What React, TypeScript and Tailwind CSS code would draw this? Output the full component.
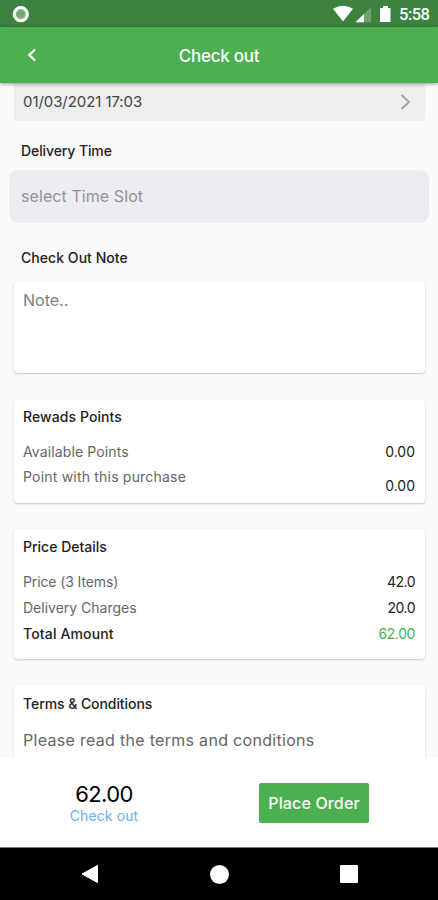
import type { ReactNode } from 'react'

interface RowProps {
  label: string
  value: string
  labelClass?: string
  valueClass?: string
}

function Card({ className, children }: { className: string; children: ReactNode }) {
  return (
    <div
      className={`ml-[14px] mr-[13px] pl-[9px] pr-[10px] shrink-0 bg-white rounded-[4px] shadow-[0_1px_2px_rgba(0,0,0,0.2)] ${className}`}
    >
      {children}
    </div>
  )
}

function Row({ label, value, labelClass = '', valueClass = '' }: RowProps) {
  return (
    <div className="flex justify-between h-[26px] leading-[26px] text-[14px]">
      <span className={labelClass}>{label}</span>
      <span className={valueClass}>{value}</span>
    </div>
  )
}

function StatusBar() {
  return (
    <div className="h-[27px] shrink-0 bg-[#3b833e] flex items-center justify-between pl-[12px] pr-[9px]">
      <svg width="18" height="18" viewBox="0 0 18 18">
        <circle cx="8.8" cy="9.2" r="6.6" fill="#8dbb8f" stroke="#fff" strokeWidth="3" />
        <circle cx="8.8" cy="9.2" r="4" fill="#78a87a" />
      </svg>
      <div className="flex items-center">
        <svg width="48" height="18" viewBox="0 0 48 18" className="mr-[4px]">
          <path d="M0 3.800 Q10 -2.300 20 3.800 L10 16.500Z" fill="#fff" />
          <path d="M38 2 V17.300 H22.500Z" fill="#719f73" />
          <path d="M31 9 V17.300 H22.500Z" fill="#fff" />
        </svg>
        <svg width="11" height="18" viewBox="0 0 11 18" className="-ml-[5px] mr-[8px]">
          <path d="M3 1 h5 v2 h2.500 v14 h-10.500 v-14 h3Z" fill="#fff" />
        </svg>
        <span className="w-[30px] font-['Roboto'] font-medium text-[16.500px] tracking-[-0.5px] leading-[27px] pt-[2px] text-white">
          5:58
        </span>
      </div>
    </div>
  )
}

function AppBar() {
  return (
    <div className="h-[56px] shrink-0 bg-[#4caf50] flex items-center relative z-10 shadow-[0_1px_4px_rgba(0,0,0,0.4)]">
      <svg width="10" height="14" viewBox="0 0 10 14" className="ml-[27px]">
        <path d="M8 1.500 L2.200 7 L8 12.500" fill="none" stroke="#fff" strokeWidth="2.300" />
      </svg>
      <h1 className="flex-1 text-center pr-[37px] pt-[3px] text-[17px] font-medium text-white tracking-[-0.25px]">
        Check out
      </h1>
    </div>
  )
}

export default function App() {
  return (
    <div className="w-[438px] h-[900px] flex flex-col overflow-hidden bg-[#fafafa] font-['Inter',sans-serif] text-[#222] whitespace-nowrap">
      <StatusBar />
      <AppBar />

      <main className="flex-1 min-h-0 overflow-hidden flex flex-col">
        {/* Delivery date */}
        <div className="ml-[14px] mr-[13px] h-[38px] shrink-0 bg-[#eeeeee] rounded-b-[3px] flex items-center justify-between pl-[9px] pr-[14px]">
          <span className="text-[15px] text-[#444] tracking-[-0.07px]">01/03/2021 17:03</span>
          <svg width="11" height="18" viewBox="0 0 11 18">
            <path d="M1.500 2 L9 9 L1.500 16" fill="none" stroke="#a3a3a3" strokeWidth="2" />
          </svg>
        </div>

        {/* Time slot */}
        <h2 className="mt-[20px] ml-[21px] h-[20px] leading-[20px] shrink-0 text-[14px] font-medium tracking-[-0.1px]">
          Delivery Time
        </h2>
        <div className="mt-[9px] mx-[9px] h-[53px] shrink-0 rounded-[9px] bg-[#ecedf1] flex items-center pl-[12px] pb-px">
          <span className="text-[16px] text-[#929399] tracking-[0.08px]">select Time Slot</span>
        </div>

        {/* Note */}
        <h2 className="mt-[25px] ml-[21px] h-[20px] leading-[20px] shrink-0 text-[14px] font-medium tracking-[0.05px]">
          Check Out Note
        </h2>
        <Card className="mt-[14px] h-[91px] pt-[6px]">
          <p className="text-[16px] leading-[24px] text-[#808080]">Note..</p>
        </Card>

        <Card className="mt-[27px] h-[103px] pt-[7px]">
          <h3 className="text-[14px] leading-[20px] font-medium tracking-[0.08px]">Rewads Points</h3>
          <div className="mt-[12px]">
            <Row label="Available Points" value="0.00" labelClass="text-[#666] tracking-[0.12px]" />
            <Row
              label="Point with this purchase"
              value="0.00"
              labelClass="text-[#666] tracking-[0.2px] -mt-px"
              valueClass="mt-[8px]"
            />
          </div>
        </Card>

        <Card className="mt-[26px] h-[130px] pt-[8px]">
          <h3 className="text-[14px] leading-[20px] font-medium">Price Details</h3>
          <div className="mt-[12px]">
            <Row label="Price (3 Items)" value="42.0" labelClass="text-[#666] tracking-[-0.12px]" valueClass="tracking-[-0.5px]" />
            <Row label="Delivery Charges" value="20.0" labelClass="text-[#666]" valueClass="tracking-[-0.5px]" />
            <Row
              label="Total Amount"
              value="62.00"
              labelClass="font-medium tracking-[0.15px]"
              valueClass="text-[#4caf50] tracking-[-0.4px]"
            />
          </div>
        </Card>

        <Card className="mt-[27px] h-[103px] pt-[8px]">
          <h3 className="text-[14px] leading-[20px] font-medium tracking-[-0.07px]">Terms &amp; Conditions</h3>
          <p className="mt-[14px] text-[16px] leading-[24px] text-[#666] tracking-[0.3px]">
            Please read the terms and conditions
          </p>
        </Card>
      </main>

      {/* Order bar */}
      <div className="h-[89px] shrink-0 bg-white flex items-center">
        <div className="w-[208px] flex flex-col items-center pt-[2px]">
          <span className="text-[22px] leading-[24px] tracking-[-0.6px] text-black">62.00</span>
          <span className="text-[14px] leading-[19px] tracking-[0.1px] text-[#64b0f6]">Check out</span>
        </div>
        <button className="ml-[51px] w-[110px] h-[40px] rounded-[2px] bg-[#4caf50] text-white text-[16px] font-medium tracking-[0.15px]">
          Place Order
        </button>
      </div>

      <div className="h-[53px] shrink-0 bg-black border-t border-[#777] flex items-center justify-between pl-[81px] pr-[80px]">
        <svg width="18" height="20" viewBox="0 0 18 20">
          <path d="M16.500 1.500 V18.500 L1 10Z" fill="#fff" stroke="#fff" strokeLinejoin="round" />
        </svg>
        <div className="w-[19px] h-[19px] rounded-full bg-white" />
        <div className="w-[18px] h-[18px] rounded-[1px] bg-white" />
      </div>
    </div>
  )
}
